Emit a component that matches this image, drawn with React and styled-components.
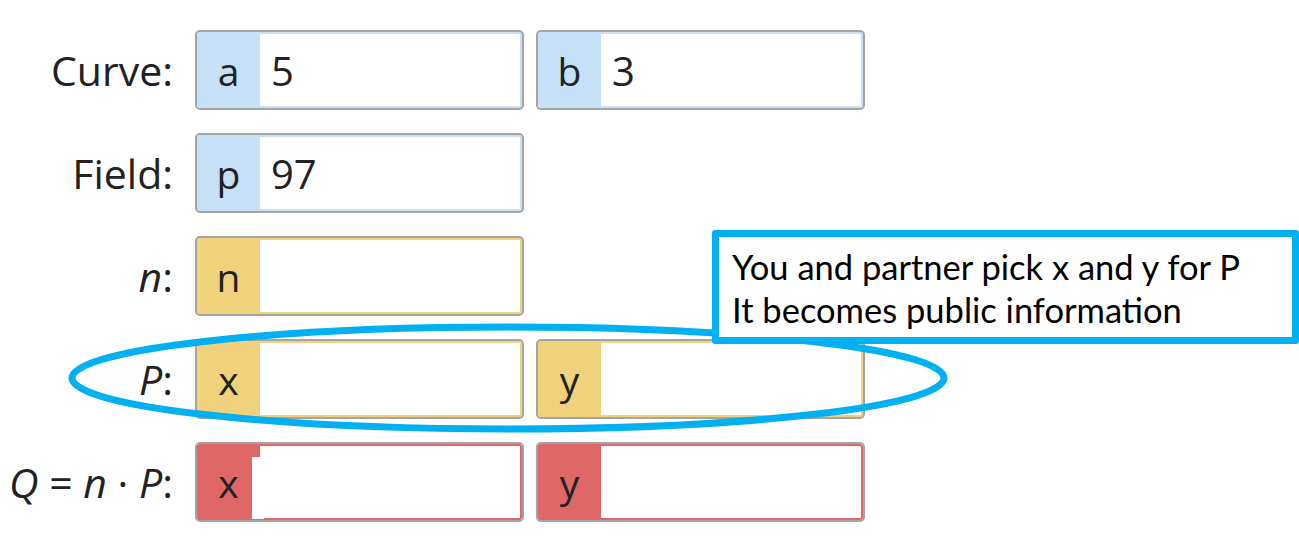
import React from "react";
import styled, { createGlobalStyle } from "styled-components";

const Global = createGlobalStyle`
  html, body { margin: 0; padding: 0; background: #fff; }
  body { font-family: "Open Sans", Lato, sans-serif; color: #1a1a1a; }
`;

const Page = styled.div`
  position: relative;
  width: 1299px;
  height: 546px;
  overflow: hidden;
  padding-top: 30px;
  box-sizing: border-box;
`;

const Rows = styled.div`
  display: flex;
  flex-direction: column;
  gap: 23px;
`;

const Row = styled.div`
  display: flex;
  align-items: center;
  gap: 12px;
  height: 80px;
`;

const Label = styled.div`
  width: 173px;
  margin-right: 10px;
  text-align: right;
  font-size: 41px;
  line-height: 80px;
  color: #222;
  white-space: nowrap;
`;

const palette = {
  blue: "#c6e1f7",
  yellow: "#efd27b",
  red: "#df6767",
};

const Field = styled.div`
  position: relative;
  display: flex;
  width: 329px;
  height: 80px;
  box-sizing: border-box;
  border: 2px solid #a4a4a4;
  border-radius: 5px;
  overflow: hidden;
  background: #fff;
  box-shadow: inset 0 0 0 2px ${(p) => palette[p.$tone]};
`;

const Prefix = styled.div`
  width: 63px;
  flex: none;
  display: flex;
  align-items: center;
  justify-content: center;
  background: ${(p) => palette[p.$tone]};
  font-size: 39px;
  color: #222;
`;

const Value = styled.div`
  display: flex;
  align-items: center;
  padding-left: 11px;
  font-size: 40px;
  color: #222;
`;

const Patch = styled.div`
  position: absolute;
  left: 55px;
  top: 13px;
  width: 12px;
  height: 62px;
  background: #fff;
`;

const Overlay = styled.svg`
  position: absolute;
  left: 0;
  top: 0;
  pointer-events: none;
`;

const Callout = styled.div`
  position: absolute;
  left: 712px;
  top: 230px;
  width: 587px;
  height: 114px;
  box-sizing: border-box;
  border: 7px solid #00b0f0;
  border-radius: 3px;
  background: #fff;
  padding: 8px 0 0 13px;
  font-family: Lato, "Open Sans", sans-serif;
  font-size: 34.5px;
  line-height: 43px;
  color: #000;
`;

function Box({ tone, prefix, value, patch }) {
  return (
    <Field $tone={tone}>
      <Prefix $tone={tone}>{prefix}</Prefix>
      <Value>{value}</Value>
      {patch && <Patch />}
    </Field>
  );
}

export default function App() {
  return (
    <Page>
      <Global />
      <Rows>
        <Row>
          <Label>Curve:</Label>
          <Box tone="blue" prefix="a" value="5" />
          <Box tone="blue" prefix="b" value="3" />
        </Row>
        <Row>
          <Label>Field:</Label>
          <Box tone="blue" prefix="p" value="97" />
        </Row>
        <Row>
          <Label>
            <i>n</i>:
          </Label>
          <Box tone="yellow" prefix="n" value="" />
        </Row>
        <Row>
          <Label>
            <i>P</i>:
          </Label>
          <Box tone="yellow" prefix="x" value="" />
          <Box tone="yellow" prefix="y" value="" />
        </Row>
        <Row>
          <Label>
            <i>Q</i> = <i>n</i> · <i>P</i>:
          </Label>
          <Box tone="red" prefix="x" value="" patch />
          <Box tone="red" prefix="y" value="" />
        </Row>
      </Rows>
      <Overlay width="1299" height="546" viewBox="0 0 1299 546">
        <ellipse cx="508" cy="378" rx="436" ry="51" fill="none" stroke="#00b0f0" strokeWidth="7" />
      </Overlay>
      <Callout>
        You and partner pick x and y for P
        <br />
        It becomes public information
      </Callout>
    </Page>
  );
}
